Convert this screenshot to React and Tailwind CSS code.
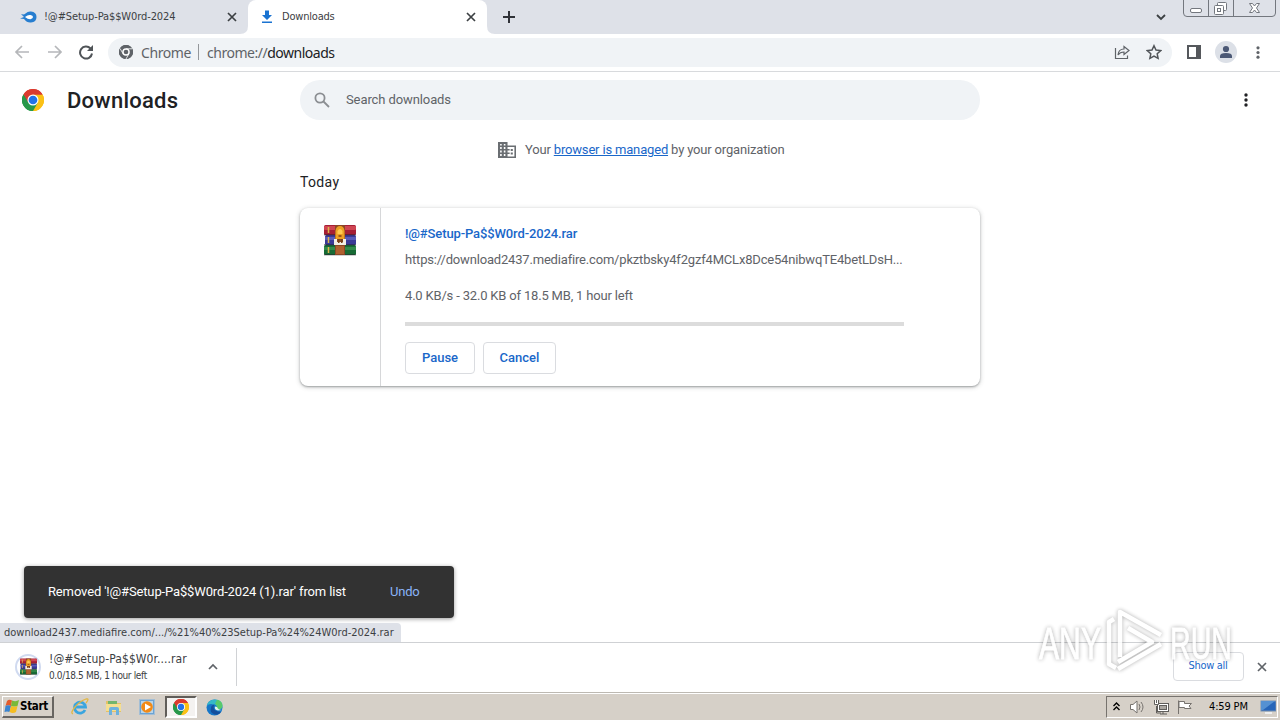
import React from "react";

const ui = "font-['DejaVu_Sans_Condensed','DejaVu_Sans',sans-serif] [font-stretch:condensed]";

function ChromeLogo({ size, mono }) {
  const c = mono ? ["#5f6368", "#5f6368", "#5f6368", "#5f6368"] : ["#db3b2f", "#fbc116", "#27984a", "#2373e8"];
  return (
    <svg width={size} height={size} viewBox="0 0 48 48" className="shrink-0">
      <path d="M24 24 3.2 12A24 24 0 0 1 44.8 12Z" fill={c[0]} />
      <path d="M24 24 44.8 12A24 24 0 0 1 24 48Z" fill={c[1]} />
      <path d="M24 24V48A24 24 0 0 1 3.2 12Z" fill={c[2]} />
      <path d="M24 12H44.8A24 24 0 0 1 24 48L34.4 30Z" fill={c[1]} />
      <path d="M13.6 30 3.2 12A24 24 0 0 1 44.8 12H24Z" fill={c[0]} />
      <path d="M34.4 30 24 48A24 24 0 0 1 3.2 12L13.6 30Z" fill={c[2]} />
      {mono && <path d="M24 13H45M14 30 3.5 12M34 30 24 48" stroke="#f1f3f4" strokeWidth="3" />}
      <circle cx="24" cy="24" r={mono ? 13 : 12} fill="white" />
      <circle cx="24" cy="24" r={mono ? 8 : 9.5} fill={c[3]} />
    </svg>
  );
}

function RarIcon({ size }) {
  return (
    <svg width={size} height={size} viewBox="0 0 32 32" className="shrink-0">
      <rect x="0" y="1" width="32" height="10" rx="1.5" fill="#a51f35" />
      <rect x="0" y="2" width="32" height="4" rx="1" fill="#cf4552" />
      <rect x="1" y="11" width="31" height="10" rx="1.5" fill="#3a3a96" />
      <rect x="1" y="13" width="31" height="3" fill="#585bb8" />
      <rect x="0" y="21" width="32" height="10" rx="1.5" fill="#176b35" />
      <rect x="0" y="23" width="32" height="3" fill="#328a4a" />
      <path d="M0 10.8H32M0 20.8H32M0 30.8H32" stroke="#29242e" strokeWidth=".7" />
      <path d="M4.5 3V9M4.5 13V19M4.5 23V29" stroke="#ddb54c" strokeWidth="1.5" />
      <rect x="11" y="1" width="10" height="30" fill="#8b4725" />
      <rect x="12" y="22" width="8" height="8" fill="#b0602f" />
      <path d="M11.500 15V7Q12 2 16 2T20.500 7V15Z" fill="#eca023" />
      <path d="M13.500 7Q16 3 18.500 7V10H13.500Z" fill="#ffc951" />
      <path d="M14.500 11H17.500V13H14.500Z" fill="#9b551a" />
      <path d="M10 15H13V18H19V15H22V21H10Z" fill="#f3eee4" />
      <path d="M14 15H15.500V19H14ZM17 15H18.500V19H17Z" fill="#754016" />
    </svg>
  );
}

function Close({ size = 10, className = "" }) {
  return (
    <svg width={size} height={size} viewBox="0 0 10 10" className={"shrink-0 " + className}>
      <path d="M1 1 9 9M9 1 1 9" stroke="currentColor" strokeWidth="1.7" />
    </svg>
  );
}

function Dots({ className = "" }) {
  return (
    <svg width="4" height="14" viewBox="0 0 4 14" className={"shrink-0 " + className} fill="currentColor">
      <circle cx="2" cy="2" r="1.7" /><circle cx="2" cy="7" r="1.7" /><circle cx="2" cy="12" r="1.7" />
    </svg>
  );
}

function TabStrip() {
  return (
    <div className="flex h-[34px] shrink-0 bg-[#dee1e8] text-[#3c4043]">
      <div className="flex w-[248px] items-center pl-5 pr-[11px]">
        <svg width="17" height="12" viewBox="0 0 17 12" className="shrink-0">
          <path d="M1 3Q4 4 5.500 2.500Q8 0 11 .500Q16.500 1 16.500 6T11 11.500Q7 12 4 8L0 7.500 4 6Z" fill="#277ed0" />
          <path d="M5 6Q8 3.500 10.500 4T13 6T10.500 8.300Q8 8.500 5 6Z" fill="white" />
        </svg>
        <span className={"ml-[7px] mt-px whitespace-nowrap text-[11px] tracking-[-0.1px] " + ui}>!@#Setup-Pa$$W0rd-2024</span>
        <Close className="ml-auto" />
      </div>
      <div className="relative flex w-[239px] items-center rounded-t-lg bg-white pl-[13px] pr-[11px]">
        <svg width="12" height="14" viewBox="0 0 12 14" className="shrink-0">
          <path d="M4 .500H8V5H11L6 10 1 5H4ZM1 11.500H11V13H1Z" fill="#1a73d1" />
        </svg>
        <span className={"ml-[9px] mt-px whitespace-nowrap text-[11px] tracking-[-0.2px] " + ui}>Downloads</span>
        <Close className="ml-auto" />
        <svg width="8" height="8" className="absolute -left-2 bottom-0"><path d="M8 0V8H0Q8 8 8 0Z" fill="white" /></svg>
        <svg width="8" height="8" className="absolute -right-2 bottom-0"><path d="M0 0V8H8Q0 8 0 0Z" fill="white" /></svg>
      </div>
      <svg width="12" height="12" viewBox="0 0 12 12" className="ml-4 mt-[11px]"><path d="M6 0V12M0 6H12" stroke="#303238" strokeWidth="2" /></svg>
      <svg width="10" height="7" viewBox="0 0 10 7" className="ml-auto mt-[14px]"><path d="M1 1 5 5 9 1" fill="none" stroke="#3c4043" strokeWidth="1.800" /></svg>
      <svg width="94" height="18" viewBox="0 0 94 18" className="ml-[17px] mr-[3px]" fill="none" stroke="#73777e">
        <path d="M.500 0V13Q.500 16.500 4 16.500H89Q92.500 16.500 92.500 13V0M25.500 0V16M50.500 0V16" />
        <rect x="7.500" y="8.500" width="11" height="4" rx="1.500" fill="white" />
        <rect x="34.500" y="2.500" width="9" height="8" rx="1" fill="white" />
        <rect x="31.500" y="5.500" width="9" height="9" rx="1" fill="white" />
        <rect x="34.500" y="8.500" width="3" height="3" />
        <path d="M66.500 3.500H69.500L71.500 6 73.500 3.500H76.500L73.500 8 76.500 12.500H73.500L71.500 10 69.500 12.500H66.500L69.500 8Z" fill="white" />
      </svg>
    </div>
  );
}

function Toolbar() {
  return (
    <div className="flex h-[38px] shrink-0 items-center border-b border-[#d8dadd] bg-white pb-px text-[#5f6368]">
      <svg width="80" height="16" viewBox="0 0 80 16" className="ml-[14px] shrink-0" fill="none" strokeWidth="1.700">
        <path d="M15 8H2M8 2 2 8 8 14M34 8H47M41 2 47 8 41 14" stroke="#b5b7ba" />
        <path d="M76.500 4.500A6 6 0 1 0 78 9.500" stroke="#505458" strokeWidth="2" />
        <path d="M79 1V7H73Z" fill="#505458" />
      </svg>
      <div className="ml-[14px] flex h-[29px] w-[1064px] items-center rounded-full bg-[#f0f3f6] pl-[11px] pr-[10px] font-['Noto_Sans',sans-serif] text-[14px]">
        <ChromeLogo size={14} mono />
        <span className="ml-2 w-[49px] whitespace-nowrap tracking-[-0.4px]">Chrome</span>
        <span className="ml-2 h-4 w-px bg-[#94979b]" />
        <span className="ml-2 whitespace-nowrap tracking-[-0.48px]">chrome://<span className="text-[#202124]">downloads</span></span>
        <svg width="16" height="16" viewBox="0 0 16 16" className="ml-auto" fill="none" stroke="#5f6368" strokeWidth="1.200">
          <path d="M1.500 4V14.500H13.500V11.500M4 11Q4.500 5 10 5V2.500L15 6.500 10 10.500V8Q6 8 4 11Z" />
        </svg>
        <svg width="16" height="16" viewBox="0 0 16 16" className="ml-4"><path d="m8 1.700 2 4.300 4.700.6-3.500 3.200.9 4.600L8 12.100l-4.100 2.300.9-4.600L1.300 6.600 6 6Z" fill="none" stroke="#505458" strokeWidth="1.500" /></svg>
      </div>
      <svg width="14" height="14" viewBox="0 0 14 14" className="ml-[15px] shrink-0"><path d="M0 0H14V14H0ZM2 2V12H9V2Z" fill="#55585c" fillRule="evenodd" /></svg>
      <svg width="22" height="22" viewBox="0 0 22 22" className="ml-[14px] shrink-0"><circle cx="11" cy="11" r="11" fill="#dce0e7" /><circle cx="11" cy="8" r="3.100" fill="#4b5875" /><path d="M5 17V15Q5 12 11 12T17 15V17Z" fill="#4b5875" /></svg>
      <Dots className="ml-[19px] h-[13px]" />
    </div>
  );
}

function DownloadCard() {
  return (
    <div className="mt-[14px] flex h-[178px] w-[680px] rounded-lg bg-white text-[13px] leading-5 text-[#5f6368] shadow-[0_1px_2px_rgba(60,64,67,.4),0_1px_4px_1px_rgba(60,64,67,.18)]">
      <div className="flex w-[81px] justify-center border-r border-[#d6d7d9] pt-4"><RarIcon size={32} /></div>
      <div className="flex flex-col pl-6 pt-4">
        <span className="whitespace-nowrap font-medium tracking-[-0.12px] text-[#1967c9]">!@#Setup-Pa$$W0rd-2024.rar</span>
        <span className="mt-[6px] whitespace-nowrap tracking-[-0.18px]">https://download2437.mediafire.com/pkztbsky4f2gzf4MCLx8Dce54nibwqTE4betLDsH...</span>
        <span className="mt-4 whitespace-nowrap tracking-[-0.18px]">4.0 KB/s - 32.0 KB of 18.5 MB, 1 hour left</span>
        <div className="mt-4 h-1 w-[499px] bg-[#dcdcdc]" />
        <div className="mt-4 flex gap-2 font-medium text-[#1967c9]">
          <button className="h-8 w-[70px] rounded border border-[#dadce0]">Pause</button>
          <button className="h-8 w-[73px] rounded border border-[#dadce0]">Cancel</button>
        </div>
      </div>
    </div>
  );
}

function Page() {
  return (
    <div className="relative flex h-[570px] shrink-0 flex-col bg-white font-[Roboto,sans-serif]">
      <div className="flex h-14 items-center pl-[22px] pr-8">
        <ChromeLogo size={22} />
        <h1 className="ml-[23px] w-[233px] whitespace-nowrap text-[22px] font-medium tracking-[0.25px] text-[#202124]">Downloads</h1>
        <div className="flex h-10 w-[680px] items-center rounded-full bg-[#f0f3f6] pl-[14px] text-[13px] text-[#5f6368]">
          <svg width="16" height="16" viewBox="0 0 16 16" fill="none" stroke="#8b8e92" strokeWidth="1.800"><circle cx="6" cy="6" r="4.600" /><path d="M9.500 9.500 15 15" /></svg>
          <span className="ml-4 tracking-[-0.1px]">Search downloads</span>
        </div>
        <Dots className="ml-auto text-[#202124]" />
      </div>
      <div className="mx-auto flex w-[680px] flex-col">
        <div className="flex h-11 items-center pl-[198px] text-[13px] text-[#5f6368]">
          <svg width="18" height="16" viewBox="0 0 17 16" preserveAspectRatio="none" fill="#6a6e72">
            <path fillRule="evenodd" d="M0 0H9V3.500H17V16H0ZM2 2V3.500H3.500V2ZM5.500 2V3.500H7V2ZM2 5V7H3.500V5ZM5.500 5V7H7V5ZM2 8.500V10.500H3.500V8.500ZM5.500 8.500V10.500H7V8.500ZM2 12V14H3.500V12ZM5.500 12V14H7V12ZM9 5V7H11V8.500H9V10.500H11V12H9V14.500H15.500V5ZM12 7H14V9H12ZM12 10.500H14V12.500H12Z" />
          </svg>
          <span className="ml-[9px] whitespace-nowrap tracking-[-0.17px]">Your <span className="text-[#1967c9] underline">browser is managed</span> by your organization</span>
        </div>
        <h2 className="h-[22px] text-[14px] leading-[21px] tracking-[0.35px] text-[#202124]">Today</h2>
        <DownloadCard />
      </div>
      <div className="absolute left-6 top-[494px] flex h-[52px] w-[430px] items-center rounded bg-[#323232] pl-6 text-[13px] text-white shadow-[0_1px_4px_rgba(0,0,0,.4)]">
        <span className="w-[342px] whitespace-nowrap tracking-[-0.14px]">Removed '!@#Setup-Pa$$W0rd-2024 (1).rar' from list</span>
        <span className="tracking-[-0.2px] text-[#8ab4f8]">Undo</span>
      </div>
      <div className={"absolute bottom-0 left-0 flex h-[19px] w-[401px] items-center whitespace-nowrap rounded-tr bg-[#dee1e8] pl-1 pt-[2px] text-[11px] text-[#3c4043] " + ui}>
        download2437.mediafire.com/.../%21%40%23Setup-Pa%24%24W0rd-2024.rar
      </div>
    </div>
  );
}

function Shelf() {
  return (
    <div className={"flex h-[50px] shrink-0 items-center border-t border-[#cfd1d4] bg-white pb-[2px] text-[#3c4043] " + ui}>
      <div className="ml-[15px] flex h-[26px] w-[26px] items-center justify-center rounded-full border-2 border-[#d0daf0]"><RarIcon size={17} /></div>
      <div className="ml-2 mt-[2px] flex w-[159px] flex-col whitespace-nowrap">
        <span className="text-[12px] leading-[17px] tracking-[0.08px]">!@#Setup-Pa$$W0r....rar</span>
        <span className="text-[10px] leading-[16px] tracking-[-0.36px]">0.0/18.5 MB, 1 hour left</span>
      </div>
      <svg width="10" height="7" viewBox="0 0 10 7"><path d="M1 6 5 2 9 6" fill="none" stroke="#5f6368" strokeWidth="1.700" /></svg>
      <span className="ml-[18px] h-[38px] w-px bg-[#d0d2d5]" />
      <button className="ml-auto h-[29px] w-[71px] rounded border border-[#dadce0] pr-px text-[11px] tracking-[-0.3px] text-[#1967c9]">Show all</button>
      <Close className="ml-[13px] mr-[13px] text-[#5f6368]" />
    </div>
  );
}

function IeIcon() {
  return (
    <svg width="18" height="18" viewBox="0 0 18 18" fill="none">
      <path d="M14 12A5.500 5.500 0 1 1 14.500 9H4" stroke="#3aa5df" strokeWidth="2.800" />
      <path d="M2 16Q-1 15 4 9T15 1Q19 0 15 5" stroke="#e2b744" strokeWidth="1.300" />
    </svg>
  );
}

function Taskbar() {
  return (
    <div className={"flex h-[27px] shrink-0 items-center border-t border-white bg-[#d6d0c8] text-[11px] text-black " + ui}>
      <div className="ml-[2px] flex h-[22px] w-[52px] shrink-0 items-center border-b-2 border-r-2 border-l border-t border-b-[#686561] border-r-[#686561] border-l-white border-t-white pl-px">
        <svg width="16" height="15" viewBox="0 0 16 15" className="shrink-0">
          <path d="M3 2Q5 0 8 1.500L7 7Q4 5.500 1.500 7Z" fill="#e35c2c" />
          <path d="M8 1.500Q12 3 15 1L13.500 7Q11 8 7 7Z" fill="#79b939" />
          <path d="M1.500 7Q4 5.500 7 7L5.500 13Q3 12 .500 13Z" fill="#3a84d0" />
          <path d="M7 7Q11 8.500 13.500 7L12 13Q9 15 5.500 13Z" fill="#f5bd22" />
        </svg>
        <span className="pt-px text-[11.5px] font-bold tracking-[-0.3px]">Start</span>
      </div>
      <div className="ml-[17px] flex items-center">
        <IeIcon />
        <svg width="18" height="18" viewBox="0 0 18 18" className="ml-4">
          <path d="M1 3H7L8 5H16V14H1Z" fill="#e4c167" /><path d="M3 3H12V8H3Z" fill="#72b56d" /><path d="M1 6H16V13H1Z" fill="#f5df91" /><path d="M4 17V11Q4 9 6 9H12Q14 9 14 11V17H11V12H7V17Z" fill="#6db2dd" />
        </svg>
        <svg width="17" height="17" viewBox="0 0 17 17" className="ml-4">
          <rect x=".5" y=".5" width="15" height="15" fill="#6aa3d4" stroke="#a3bed5" /><rect x="2" y="2" width="12" height="12" fill="#b9d4e7" /><circle cx="8" cy="8" r="5.800" fill="#f28a16" /><path d="M6 4.500 12 8 6 11.500Z" fill="white" />
        </svg>
        <div className="ml-[9px] flex h-[22px] w-[32px] items-center justify-center border-2 border-b-white border-l-[#605d59] border-r-white border-t-[#605d59] bg-[#f4f2f0]"><ChromeLogo size={16} /></div>
        <svg width="17" height="17" viewBox="0 0 17 17" className="ml-[9px]">
          <circle cx="8.500" cy="8.500" r="8" fill="#1676c8" /><path d="M.700 7Q2 .5 9 .5Q16.500 1 16.500 7Q16 11 10.500 10.500Q12 6 8 5.500Q3 4 .700 7Z" fill="#35b8c8" /><path d="M11 .800Q16.500 2 16.500 7Q16 11 10.500 10.500Q12 6 9 5Z" fill="#59c96b" /><path d="M5 9Q5 6 8.500 5.500Q5 12 15 13Q11 18 6 14Q4 12 5 9Z" fill="#154f9c" /><path d="M9 7.500Q8 11 12 11.500L16 11Q12 11 11 8Z" fill="#e4f5ed" />
        </svg>
      </div>
      <div className="ml-auto flex h-[22px] w-[172px] items-center border border-b-white border-l-[#77736e] border-r-white border-t-[#77736e] pl-[6px]">
        <svg width="7" height="9" viewBox="0 0 7 9" className="mb-[2px]" fill="none" stroke="black" strokeWidth="1.400"><path d="M.500 4 3.500 1 6.500 4M.500 8 3.500 5 6.500 8" /></svg>
        <svg width="17" height="16" viewBox="0 0 17 16" className="ml-[9px]" fill="none" stroke="#77736f"><path d="M1.500 5.500H4L8 2V14L4 10.500H1.500Z" fill="white" /><path d="M10 5Q12 8 10 11M12 3Q16 8 12 13" /></svg>
        <svg width="17" height="16" viewBox="0 0 17 16" className="ml-[7px]" fill="none" stroke="#605e5b"><rect x="4.500" y="4.500" width="11" height="8" fill="white" /><rect x="6.500" y="6.500" width="7" height="4" fill="#aaa6a0" /><path d="M7 15H14M10 13V15M3.500 7V14H8" fill="none" /><path d="M1.500 1V5.500H5.500V1M3.500 1V4" fill="white" /></svg>
        <svg width="17" height="16" viewBox="0 0 17 16" className="ml-[6px]" fill="white" stroke="#77736f"><path d="M2.500 1.500V15M3 2.500H8.500V4.500H15.500L13 7 15 9.500H8.500V8.500H3Z" /></svg>
        <span className="ml-4 whitespace-nowrap pt-px tracking-[-0.15px]">4:59 PM</span>
        <svg width="16" height="14" viewBox="0 0 16 14" className="ml-auto mr-px"><rect x="1" y="1" width="15" height="10" fill="#2665b9" stroke="#758fb0" /><path d="M1 1H15L3 10H1Z" fill="#5591d2" /><path d="M5 13H12" stroke="#eee" strokeWidth="2" /></svg>
      </div>
      <span className="w-[2px]" />
    </div>
  );
}

function Watermark() {
  return (
    <svg width="204" height="72" viewBox="0 0 204 72" className="pointer-events-none absolute left-[1036px] top-[606px] opacity-85 drop-shadow-[0_0_2px_rgba(0,0,0,.38)]" fill="white" stroke="white" strokeWidth=".8">
      <text x="3" y="53" fontFamily="Liberation Sans, sans-serif" fontSize="45" textLength="62" lengthAdjust="spacingAndGlyphs">ANY</text>
      <g fill="none" strokeWidth="4.500" strokeLinejoin="round">
        <path d="M84 51V6L125 29" />
        <path d="M78 13 73 16V58L80 62" />
        <path d="M92 22 116 36 82 56" />
        <path d="M125 38 82 63" />
      </g>
      <text x="134" y="53" fontFamily="Liberation Sans, sans-serif" fontSize="45" textLength="62" lengthAdjust="spacingAndGlyphs">RUN</text>
    </svg>
  );
}

export default function App() {
  return (
    <div className="relative flex h-[720px] w-[1280px] flex-col overflow-hidden bg-[#d6d0c8]">
      <TabStrip />
      <Toolbar />
      <Page />
      <Shelf />
      <div className="h-px shrink-0 bg-[#bdb9b2]" />
      <Taskbar />
      <Watermark />
    </div>
  );
}
